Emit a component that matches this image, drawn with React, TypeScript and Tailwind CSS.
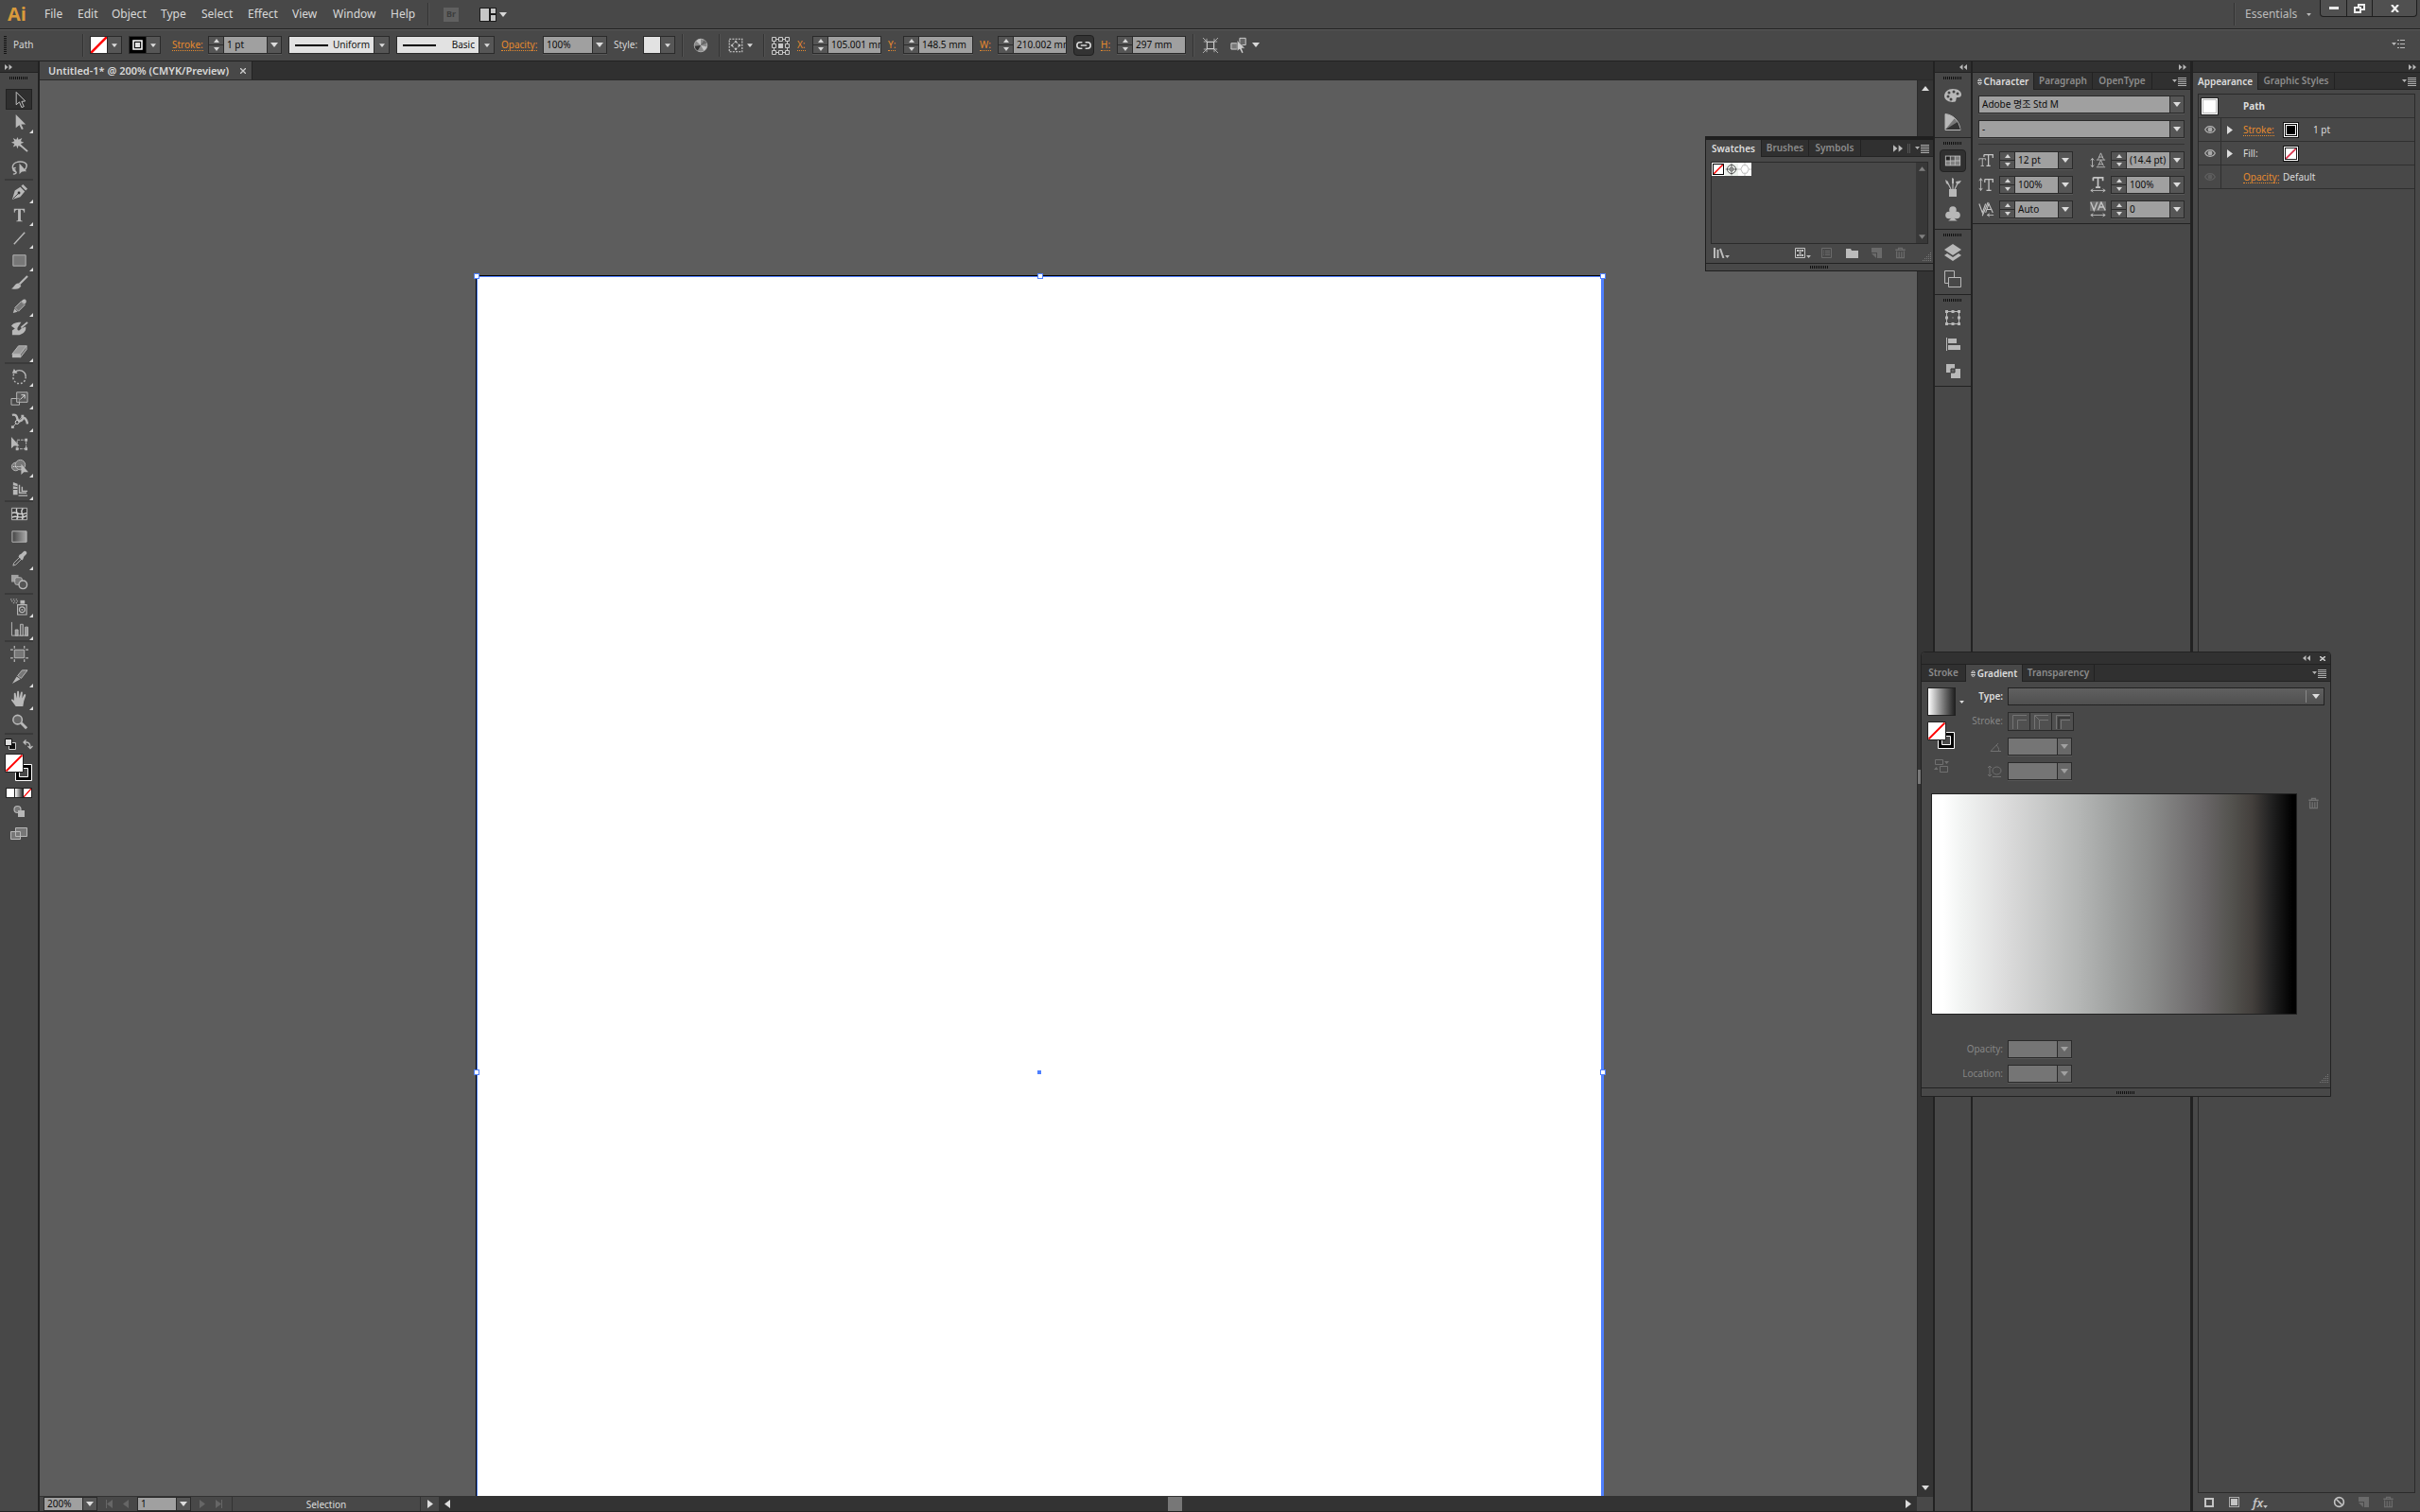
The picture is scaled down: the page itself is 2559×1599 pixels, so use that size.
import { memo, type ReactNode } from 'react';
import clsx from 'clsx';

type IconProps = { children: ReactNode; size?: number; className?: string };

function Icon({ children, size = 20, className }: IconProps) {
  return (
    <svg
      width={size}
      height={size}
      viewBox="0 0 20 20"
      fill="none"
      stroke="currentColor"
      strokeWidth="1"
      aria-hidden="true"
      className={clsx('shrink-0', className)}
    >
      {children}
    </svg>
  );
}

const Down = ({ className }: { className?: string }) => (
  <svg width="8" height="5" viewBox="0 0 8 5" fill="currentColor" aria-hidden="true" className={className}>
    <path d="M0 0h8L4 5z" />
  </svg>
);

const Right = ({ className }: { className?: string }) => (
  <svg width="6" height="9" viewBox="0 0 6 9" fill="currentColor" aria-hidden="true" className={className}>
    <path d="M0 0l6 4.5L0 9z" />
  </svg>
);

const Collapse = ({ left = false, large = false }: { left?: boolean; large?: boolean }) => (
  <svg
    width={large ? 10 : 8}
    height={large ? 8 : 6}
    viewBox="0 0 8 6"
    fill="#b8b8b8"
    aria-hidden="true"
    className={left ? 'rotate-180' : ''}
  >
    <path d="M0 0l3.500 3L0 6zM4.500 0L8 3 4.500 6z" />
  </svg>
);

const PanelMenu = () => (
  <button aria-label="Panel menu" className="text-[#b0b0b0]">
    <svg width="15" height="9" viewBox="0 0 15 9" fill="currentColor">
      <path d="M0 2h5L2.500 5zM6 0h9v1H6zM6 2h9v1H6zM6 4h9v1H6zM6 6h9v1H6zM6 8h9v1H6z" />
    </svg>
  </button>
);

const Grip = ({ vertical = false }: { vertical?: boolean }) => (
  <div
    className={clsx(
      vertical
        ? 'h-5 w-[3px] bg-[repeating-linear-gradient(180deg,#151515_0_1px,#484848_1px_2px)]'
        : 'h-[3px] w-5 bg-[repeating-linear-gradient(90deg,#111_0_1px,#484848_1px_2px)]',
    )}
  />
);

const Sep = () => <div className="h-6 w-px shrink-0 bg-[#333] shadow-[1px_0_0_#525252]" />;

/* ---------- form parts ---------- */

function Spinner({ label }: { label: string }) {
  return (
    <span className="flex w-4 shrink-0 flex-col divide-y divide-[#2a2a2a] border-r border-[#2a2a2a] text-[#d6d6d6]">
      <button aria-label={`Increase ${label}`} className="flex flex-1 items-center justify-center bg-[#555]">
        <svg width="6" height="4" viewBox="0 0 6 4" fill="currentColor"><path d="M0 4h6L3 0z" /></svg>
      </button>
      <button aria-label={`Decrease ${label}`} className="flex flex-1 items-center justify-center bg-[#555]">
        <svg width="6" height="4" viewBox="0 0 6 4" fill="currentColor"><path d="M0 0h6L3 4z" /></svg>
      </button>
    </span>
  );
}

type FieldProps = {
  label: string;
  value?: string;
  className: string;
  spinner?: boolean;
  arrow?: boolean;
  disabled?: boolean;
};

function Field({ label, value = '', className, spinner, arrow = true, disabled }: FieldProps) {
  return (
    <div className={clsx('flex h-[19px] shrink-0 border border-[#2a2a2a] shadow-[0_1px_0_#575757]', className)}>
      {spinner && <Spinner label={label} />}
      <input
        aria-label={label}
        defaultValue={value}
        disabled={disabled}
        className={clsx('w-0 min-w-0 flex-1 pl-[3px] text-[10px] outline-none', disabled ? 'bg-[#757575]' : 'bg-[#a0a0a0] text-[#0c0c0c]')}
      />
      {arrow && (
        <button
          aria-label={`${label} options`}
          disabled={disabled}
          className={clsx(
            'flex w-[15px] shrink-0 items-center justify-center border-l border-[#2a2a2a]',
            disabled ? 'bg-[#686868] text-[#a0a0a0]' : 'bg-[#565656] text-[#dcdcdc]',
          )}
        >
          <Down />
        </button>
      )}
    </div>
  );
}

function LineSelect({ label, value, className }: { label: string; value: string; className: string }) {
  return (
    <div className={clsx('relative flex h-[19px] shrink-0 border border-[#2a2a2a]', className)}>
      <select aria-label={label} className="min-w-0 flex-1 appearance-none bg-[#e2e2e2] pr-5 text-right text-[10px] text-[#111] outline-none [text-align-last:right]">
        <option>{value}</option>
      </select>
      <span className="pointer-events-none absolute top-2 left-[6px] h-[2px] w-[35px] bg-black" />
      <span className="pointer-events-none absolute inset-y-0 right-0 flex w-4 items-center justify-center border-l border-[#2a2a2a] bg-[#565656] text-[#dcdcdc]">
        <Down className="h-1 w-1.5" />
      </span>
    </div>
  );
}

function SwatchButton({ label, children }: { label: string; children: ReactNode }) {
  return (
    <button aria-label={label} className="flex h-[19px] w-[34px] shrink-0 border border-[#2a2a2a] bg-[#565656] text-[#dcdcdc]">
      <span className="flex h-full w-[18px] border-r border-[#2a2a2a]">{children}</span>
      <span className="flex h-full flex-1 items-center justify-center"><Down className="h-1 w-1.5" /></span>
    </button>
  );
}

const NoneMark = ({ color = '#f00' }: { color?: string }) => (
  <svg viewBox="0 0 20 20" preserveAspectRatio="none" className="size-full bg-white" aria-hidden="true">
    <path d="M0 20L20 0" stroke={color} strokeWidth="3" />
  </svg>
);

const Orange = ({ children, className }: { children: ReactNode; className?: string }) => (
  <span className={clsx('shrink-0', className)}>
    <a href="#" className="inline-block border-b border-dotted border-[#e68a2e] text-[10px] leading-3 text-[#e68a2e]">{children}</a>
  </span>
);

const FillStroke = () => (
  <button aria-label="Fill and stroke" className="block size-[30px]">
    <svg viewBox="0 0 30 30" width="30" height="30">
      <path d="M11.500 11.500h17v17h-17z" fill="#000" stroke="#fff" />
      <path d="M15.500 15.500h9v9h-9z" fill="#484848" stroke="#fff" />
      <path d="M.5.500h19v19H.500z" fill="#fff" stroke="#222" />
      <path d="M1.500 18.500l17-17" stroke="#f00" strokeWidth="1.800" />
    </svg>
  </button>
);

/* ---------- menu and control bars ---------- */

const menus: [string, string][] = [
  ['File', 'w-[35px]'],
  ['Edit', 'w-9'],
  ['Object', 'w-[52px]'],
  ['Type', 'w-[43px]'],
  ['Select', 'w-[49px]'],
  ['Effect', 'w-[47px]'],
  ['View', 'w-[43px]'],
  ['Window', 'w-[61px]'],
  ['Help', 'w-[39px]'],
];

function MenuBar() {
  return (
    <header className="flex h-[31px] shrink-0 items-center border-b border-[#222] bg-[#484848] pl-2 text-[12px] text-[#d8d8d8]">
      <span className="w-[39px] font-['Open_Sans',sans-serif] text-[20px] leading-7 font-bold text-[#d99a3c]">Ai</span>
      <nav className="flex">
        {menus.map(([name, width]) => (
          <button key={name} className={clsx('text-left', width)}>{name}</button>
        ))}
      </nav>
      <Sep />
      <button aria-label="Bridge" className="ml-4 flex h-[15px] w-4 items-center justify-center bg-[#606060] text-[9px] font-bold text-[#3d3d3d]">Br</button>
      <button aria-label="Arrange documents" className="ml-[22px] flex items-center gap-[3px] text-[#d8d8d8]">
        <svg width="18" height="15" viewBox="0 0 18 15" fill="#c6c6c6">
          <path d="M0 0h18v15H0z" fill="#1c1c1c" />
          <path d="M1 1h9v13H1zM12 1h5v5h-5zM12 8h5v6h-5z" />
        </svg>
        <Down />
      </button>
      <div className="ml-auto flex h-full items-center">
        <Sep />
        <button className="ml-[11px] flex w-[79px] items-center gap-2.5 text-[#bcbcbc]">
          Essentials <Down className="h-[3px] w-[5px]" />
        </button>
        <div className="mr-[3px] flex h-[18px] self-start divide-x divide-[#1e1e1e] rounded-b border border-t-0 border-[#1e1e1e] bg-[#505050] text-white">
          <button aria-label="Minimize" className="flex w-7 items-center justify-center"><span className="h-[3px] w-2.5 bg-[#e8e8e8]" /></button>
          <button aria-label="Restore" className="flex w-[27px] items-center justify-center">
            <svg width="12" height="10" viewBox="0 0 12 10" fill="none" stroke="#eee" strokeWidth="2"><path d="M1 4h6v5H1zM5 3V1h6v5H8" /></svg>
          </button>
          <button aria-label="Close" className="flex w-[46px] items-center justify-center">
            <svg width="9" height="8" viewBox="0 0 9 8" stroke="#eee" strokeWidth="2.200"><path d="M1 0l7 8M8 0L1 8" /></svg>
          </button>
        </div>
      </div>
    </header>
  );
}

function ControlBar() {
  return (
    <div className="flex h-[34px] shrink-0 items-center gap-[7px] border-t border-b border-t-[#5a5a5a] border-b-[#222] bg-[#484848] pr-4 pb-px pl-1 text-[10px] text-[#d8d8d8]">
      <Grip vertical />
      <span className="w-[66px]">Path</span>
      <Sep />
      <SwatchButton label="Fill"><NoneMark /></SwatchButton>
      <SwatchButton label="Stroke">
        <svg viewBox="0 0 17 17" className="size-full"><path d="M0 0h17v17H0z" fill="#000" /><path d="M4 4h9v9H4z" fill="#111" stroke="#fff" strokeWidth="1.500" /><path d="M6 6h5v5H6z" fill="#e2e2e2" /></svg>
      </SwatchButton>
      <div className="ml-[5px] flex items-center">
        <Orange className="w-[38px]">Stroke:</Orange>
        <Field label="Stroke weight" value="1 pt" className="w-[78px]" spinner />
      </div>
      <LineSelect label="Variable width profile" value="Uniform" className="w-[107px]" />
      <LineSelect label="Brush definition" value="Basic" className="w-[104px]" />
      <div className="flex items-center">
        <Orange className="w-11">Opacity:</Orange>
        <Field label="Opacity" value="100%" className="w-[68px]" />
      </div>
      <div className="flex items-center">
        <span className="w-[31px]">Style:</span>
        <SwatchButton label="Graphic style"><span className="size-full bg-[#e2e2e2]" /></SwatchButton>
      </div>
      <Sep />
      <button aria-label="Recolor artwork" className="flex w-6 justify-center">
        <Icon size={16}>
          <circle cx="10" cy="10" r="8.500" fill="#8a8a8a" stroke="#bbb" />
          <path d="M10 10L4 4a8 8 0 0 1 6-2.500zM10 10l8 2a8 8 0 0 1-4 5z" fill="#c4c4c4" stroke="none" />
          <path d="M10 10l-4 7a8 8 0 0 1-4-6z" fill="#333" stroke="none" />
          <path d="M10 10l4-7a8 8 0 0 1 4 4z" fill="#666" stroke="none" />
        </Icon>
      </button>
      <Sep />
      <button aria-label="Align to" className="mx-[2px] flex w-7 items-center gap-1">
        <Icon size={16}>
          <path d="M1.500 1.500h17v17h-17z" strokeDasharray="2.500 1.500" strokeWidth="1.300" />
          <path d="M10 3l2 3H8zM10 17l2-3H8zM3 10l3-2v4zM17 10l-3-2v4z" fill="currentColor" stroke="none" />
          <circle cx="10" cy="10" r="4" strokeDasharray="3 1.500" />
        </Icon>
        <Down className="h-1 w-1.5" />
      </button>
      <Sep />
      <button aria-label="Reference point">
        <Icon size={20} className="text-[#c8c8c8]">
          <path d="M1.500 1.500h4v4h-4zM8.500 1.500h4v4h-4zM15.500 1.500h4v4h-4zM1.500 8.500h4v4h-4zM15.500 8.500h4v4h-4zM1.500 15.500h4v4h-4zM8.500 15.500h4v4h-4zM15.500 15.500h4v4h-4zM6 3.500h2M13 3.500h2M6 17.500h2M13 17.500h2M3.500 6v2M3.500 13v2M17.500 6v2M17.500 13v2" />
          <path d="M8 8h5v5H8z" fill="currentColor" stroke="none" />
        </Icon>
      </button>
      <div className="ml-[1px] flex items-center">
        <Orange className="w-4">X:</Orange>
        <Field label="X" value="105.001 mm" className="w-[73px]" spinner arrow={false} />
      </div>
      <div className="flex items-center">
        <Orange className="w-4">Y:</Orange>
        <Field label="Y" value="148.5 mm" className="w-[74px]" spinner arrow={false} />
      </div>
      <div className="flex items-center">
        <Orange className="w-[19px]">W:</Orange>
        <Field label="Width" value="210.002 mm" className="w-[73px]" spinner arrow={false} />
      </div>
      <button aria-label="Constrain proportions" className="flex h-[22px] w-[22px] items-center justify-center rounded-sm border border-[#202020] bg-[#333]">
        <Icon size={16}><path d="M8 6H5a4 4 0 0 0 0 8h3M12 6h3a4 4 0 0 1 0 8h-3M6 10h8" strokeWidth="2" /></Icon>
      </button>
      <div className="flex items-center">
        <Orange className="w-[17px]">H:</Orange>
        <Field label="Height" value="297 mm" className="w-[73px]" spinner arrow={false} />
      </div>
      <Sep />
      <button aria-label="Isolate object" className="ml-[3px] text-[#c8c8c8]">
        <Icon size={16}><path d="M5.500 5.500h9v9h-9z" strokeWidth="1.500" /><path d="M0 0l5 5M20 0l-5 5M0 20l5-5M20 20l-5-5M1 5h4V1M15 1v4h4M1 15h4v4M19 15h-4v4" /></Icon>
      </button>
      <button aria-label="Select similar objects" className="ml-1.5 flex items-center gap-[5px] text-[#d8d8d8]">
        <Icon size={18}>
          <path d="M1 7.500h7v7H1z" fill="#777" /><path d="M11 1.500h7v8h-7z" fill="#666" />
          <path d="M8 4v13l3-2.500 2.500 5 2-1-2-5h4z" fill="#ccc" stroke="#333" strokeWidth=".600" />
        </Icon>
        <Down />
      </button>
      <div className="ml-auto">
        <button aria-label="Control bar menu" className="text-[#b8b8b8]">
          <svg width="14" height="9" viewBox="0 0 14 9" fill="currentColor"><path d="M0 3h5L2.500 6zM6 0h2v1H6zM6 4h2v1H6zM6 8h2v1H6zM9 0h5v1H9zM9 4h5v1H9zM9 8h5v1H9z" /></svg>
        </button>
      </div>
    </div>
  );
}

/* ---------- toolbox ---------- */

type Tool = { name: string; art: ReactNode; more?: boolean };

const F = { fill: 'currentColor', stroke: 'none' };

const toolGroups: Tool[][] = [
  [
    { name: 'Selection', art: <path d="M6.500 1.500v14l3.500-3 2.500 6 2.500-1-2.500-5.500 4-.5z" fill="#2c2c2c" stroke="#c8c8c8" /> },
    { name: 'Direct Selection', more: true, art: <path {...F} d="M6 1v15l4-3 2.500 5 2-1-2.500-5h5z" /> },
    { name: 'Magic Wand', art: <><path {...F} d="M8 1l1 3 4-2-1.500 3.500L15 7l-3.500 1.500L13 12l-4-1.500L8 14l-1.500-3.500L3 12l1.500-3.500L1 7l3.500-1.500L3 2l3.500 2z" /><path d="M11 10l8 7" strokeWidth="2" /></> },
    { name: 'Lasso', art: <><path d="M6 13C1 12 1 5 8 3.500c6-1 11 1 10 5s-4 5-6 5M6 10c-3 0-4 3-1 4s1 3-2 3" strokeWidth="1.500" /><path {...F} d="M10 5v12l3-3h5z" /></> },
  ],
  [
    { name: 'Pen', more: true, art: <><path {...F} d="M2 18l3-10 6-4 5 5-5 6z" /><path {...F} d="M12 3l2-2 5 5-2 2z" /><path d="M3 17l6-6" stroke="#444" /><circle cx="9.500" cy="10.500" r="1.500" fill="#333" stroke="none" /></> },
    { name: 'Type', more: true, art: <path {...F} d="M4 3h12v4h-1c0-2-1-3-3.500-3v11c0 1 .5 1.500 2 1.500v.5h-7v-.5c1.500 0 2-.5 2-1.500V4C6 4 5 5 5 7H4z" /> },
    { name: 'Line Segment', more: true, art: <path d="M4 17L16 4" strokeWidth="1.500" /> },
    { name: 'Rectangle', more: true, art: <path d="M3 4h14v12H3z" fill="#777" /> },
    { name: 'Paintbrush', art: <><path d="M19 2l-9 9" strokeWidth="2.200" /><path {...F} d="M9 10l3 3c-2 4-6 4-11 3 3-1 4-6 8-6z" /></> },
    { name: 'Pencil', more: true, art: <><path {...F} d="M3 18l1.500-5 3.500 3.500z" /><path d="M5 12l7-7 4 4-7 7z" fill="#777" /><path {...F} d="M13 4c3-3 6 0 4 3l-1 1-4-3z" /></> },
    { name: 'Blob Brush', art: <><path {...F} d="M1 7c3-4 8-4 11-4L8 9c-1 4 2 4 4 1l5-2c1 4-2 8-7 9H2v-5l3-2z" /><path d="M19 3l-7 6" strokeWidth="2" /></> },
    { name: 'Eraser', more: true, art: <><path d="M2 13l7-9h9l-7 9z" fill="#999" /><path {...F} d="M2 13h9v4H2z" /><path d="M11 13v4l7-9V4z" fill="#777" /></> },
  ],
  [
    { name: 'Rotate', more: true, art: <><path d="M5 6a7 7 0 0 1 12 5" strokeWidth="1.500" /><path d="M17 11a7 7 0 1 1-13-3" strokeDasharray="2 2" strokeWidth="1.500" /><path {...F} d="M2 7l2-5 4 5z" /></> },
    { name: 'Scale', more: true, art: <><path d="M1 10h9v7H1z" /><path d="M7 3h12v11H7z" fill="#666" fillOpacity=".6" /><path d="M11 11l5-5M12 6h4v4" stroke="#ddd" /></> },
    { name: 'Width', more: true, art: <><path d="M2 3c4-1 5 1 6 5s5 1 6-1 4 0 5 6" strokeWidth="2.500" /><path d="M2 17L14 4" /><circle cx="7.500" cy="11" r="2" fill="#444" stroke="#ddd" /><path {...F} d="M1 15h3v3H1zM12 3h3v3h-3z" /></> },
    { name: 'Free Transform', more: false, art: <><path {...F} d="M1 2v13l3-3h6z" /><path d="M7.500 5.500h10v10h-10z" strokeDasharray="3 1" /><path {...F} d="M16 4h3v3h-3zM16 14h3v3h-3zM6 14h3v3H6z" /></> },
    { name: 'Shape Builder', more: true, art: <><circle cx="6" cy="10" r="4.500" fill="#777" /><circle cx="11" cy="8" r="5.500" fill="#777" /><path d="M3 10h11" stroke="#eee" strokeDasharray="1 1" /><path {...F} d="M12 7v12l3-3h5z" /></> },
    { name: 'Perspective Grid', more: true, art: <><path {...F} d="M3 2l5 2v12H3z" /><path d="M10 5v9h8M13 7v5h6M9 17h10" strokeWidth="1.500" /><path d="M3 6l5 1M3 10h5" stroke="#444" /></> },
  ],
  [
    { name: 'Mesh', art: <><path d="M1.500 3.500h17v13h-17z" fill="#3a3a3a" /><path d="M2 9c5-3 6 4 16 0M2 14c4-4 10 3 16-2M7 4c-2 5 4 7 0 12M14 4c-5 5 3 7-1 12" stroke="#d0d0d0" strokeWidth="1.500" /></> },
    { name: 'Gradient', art: <><defs><linearGradient id="gt"><stop stopColor="#444" /><stop offset="1" stopColor="#aaa" /></linearGradient></defs><path d="M2 4h16v12H2z" fill="url(#gt)" /></> },
    { name: 'Eyedropper', more: true, art: <><path d="M3 17l1-3 7-7 2 2-7 7z" /><path {...F} d="M10 5l2-1 3-3c2-1 4 1 3 3l-3 3-1 3-1 1-4-4z" /></> },
    { name: 'Blend', art: <><path {...F} d="M1 2h8v8H1z" opacity=".8" /><rect x="5" y="5" width="8" height="8" rx="2" fill="#777" /><circle cx="14" cy="13" r="4.500" fill="#555" strokeWidth="1.500" /></> },
  ],
  [
    { name: 'Symbol Sprayer', more: true, art: <><path d="M8 8h10v11H8z" strokeWidth="1.200" /><circle cx="13" cy="13.500" r="3" strokeWidth="1.300" /><circle {...F} cx="13" cy="13.500" r="1" /><path {...F} d="M11 3h5v4h-5z" /><path d="M0 2h9M1 4h9M3 6h6" strokeDasharray="1.500 1.500" /></> },
    { name: 'Column Graph', more: true, art: <><path d="M1.500 2v15H20" /><path d="M5.500 10.500h3V17h-3zM16.500 7.500h3V17h-3z" fill="#999" /><path d="M11 4.500h3V17h-3z" fill="#666" /></> },
  ],
  [
    { name: 'Artboard', art: <><path d="M4.500 5.500h11v9h-11z" fill="#777" /><path d="M4.500 1v3M15.500 1v3M4.500 16v3M15.500 16v3M0 5.500h3M17 5.500h3M0 14.500h3M17 14.500h3" strokeWidth="1.300" /></> },
    { name: 'Slice', more: true, art: <><path {...F} d="M2 18l5-8 4 3z" /><path d="M8 9l5-6h6l-7 9z" fill="#777" /></> },
    { name: 'Hand', more: true, art: <path {...F} d="M6 18L1 11c0-2 2-1 3 .5L4 4c0-1.500 2-1.500 2 0l1 5 .5-7c0-1.500 2-1.500 2 0L10 9l1.500-6.500c.5-1.500 2-1 2 .5L13 9l2-4c1-1.500 2.500-.5 2 1l-2 6-1 6z" /> },
    { name: 'Zoom', art: <><circle cx="8" cy="7.500" r="5" fill="#666" strokeWidth="1.600" /><path d="M12 11l6 6" strokeWidth="3" /></> },
  ],
];

function ToolBox() {
  return (
    <aside className="flex w-[42px] shrink-0 flex-col items-center border-r-2 border-[#222] bg-[#484848] text-[#b8b8b8]">
      <div className="flex h-3 w-full items-center border-b border-[#222] bg-[#313131] pl-[5px]"><Collapse /></div>
      <div className="flex h-4 items-start pt-1"><Grip /></div>
      {toolGroups.map((group, i) => (
        <div key={i} className="w-[30px] border-b-2 border-[#3a3a3a] last-of-type:border-b-0">
          {group.map((tool) => (
            <button
              key={tool.name}
              aria-label={tool.name}
              className="relative flex h-6 w-full items-center justify-center"
            >
              <span className={clsx('flex h-[22px] w-7 items-center justify-center', tool.name === 'Selection' && 'border border-[#222] bg-[#2f2f2f]')}>
                <Icon size={19}>{tool.art}</Icon>
              </span>
              {tool.more && (
                <svg width="4" height="4" className="absolute right-0 bottom-0" fill="#ddd"><path d="M4 0v4H0z" /></svg>
              )}
            </button>
          ))}
        </div>
      ))}
      <div className="flex h-5 w-[30px] items-center justify-between">
        <button aria-label="Default fill and stroke">
          <svg width="12" height="12" viewBox="0 0 12 12"><path d="M4.500 4.500h7v7h-7z" fill="#111" stroke="#ccc" /><path d="M.5.500h7v7h-7z" fill="#ddd" stroke="#111" /></svg>
        </button>
        <button aria-label="Swap fill and stroke">
          <svg width="11" height="11" viewBox="0 0 11 11" fill="none" stroke="#bbb" strokeWidth="1.300"><path d="M1 3h3c3 0 4 2 4 6M3.500.500L1 3l2.500 2.500M5.500 7L8 9.500 10.500 7" /></svg>
        </button>
      </div>
      <FillStroke />
      <div className="mt-[6px] flex h-[11px] w-7 divide-x divide-[#222] border border-[#222]">
        <button aria-label="Color" className="flex-1 bg-white" />
        <button aria-label="Gradient fill" className="flex-1 bg-linear-to-r from-white to-[#333]" />
        <button aria-label="None" className="flex flex-1"><NoneMark /></button>
      </div>
      <button aria-label="Drawing mode" className="mt-1"><Icon><circle cx="8.500" cy="8" r="3.500" fill="#777" strokeWidth="1.200" /><path {...F} d="M9 9h7v7H9z" /></Icon></button>
      <button aria-label="Screen mode" className="mt-[3px]"><Icon><path d="M1.500 8.500h10v8h-10zM6.500 4.500h12v9h-12z" fill="#777" /></Icon></button>
    </aside>
  );
}

/* ---------- document window ---------- */

const handles = [
  'left-[-3px] top-[-3px]',
  'left-1/2 -ml-[3px] top-[-3px]',
  'right-[-2px] top-[-3px]',
  'left-[-3px] top-1/2 -mt-[3px]',
  'right-[-2px] top-1/2 -mt-[3px]',
];

function Canvas() {
  return (
    <div className="relative min-w-0 flex-1 overflow-hidden bg-[#5d5d5d]">
      <div className="absolute top-[206px] left-[461px] h-[1685px] w-[1193px] border-t border-l border-black bg-white">
        <div className="absolute inset-0 border-t border-r-[3px] border-l border-[#4f80ff]" />
        {handles.map((pos) => (
          <span key={pos} className={clsx('absolute size-[6px] border border-[#4f80ff] bg-white', pos)} />
        ))}
        <span className="absolute top-1/2 left-1/2 -mt-0.5 -ml-[3px] size-1 bg-[#4f80ff]" />
      </div>
    </div>
  );
}

function StatusBar() {
  return (
    <footer className="flex h-4 shrink-0 border-t border-[#333] bg-[#484848] text-[10px] text-[#dcdcdc]">
      <div className="flex w-[203px] items-center gap-[9px] pl-1">
        <Field label="Zoom level" value="200%" className="h-[15px]! w-[57px]" />
        <span className="flex w-6 justify-between text-[#666]">
          <button aria-label="First artboard" className="flex"><i className="h-[9px] w-px bg-current" /><Right className="rotate-180" /></button>
          <button aria-label="Previous artboard"><Right className="rotate-180" /></button>
        </span>
        <Field label="Artboard" value="1" className="h-[15px]! w-[57px]" />
        <span className="flex w-6 justify-between text-[#666]">
          <button aria-label="Next artboard"><Right /></button>
          <button aria-label="Last artboard" className="flex"><Right /><i className="h-[9px] w-px bg-current" /></button>
        </span>
      </div>
      <span className="flex w-[200px] items-center justify-center border-x border-[#333] pt-0.5">Selection</span>
      <button aria-label="Status menu" className="flex w-[19px] items-center justify-center"><Right /></button>
      <div className="flex min-w-0 flex-1 items-center justify-between bg-[#333] px-1.5">
        <button aria-label="Scroll left"><Right className="rotate-180" /></button>
        <span className="mr-1.5 h-full w-[15px] bg-[#777]" />
        <button aria-label="Scroll right"><Right /></button>
      </div>
      <div className="w-[17px] bg-[#484848]" />
    </footer>
  );
}

function DocumentWindow() {
  return (
    <main className="flex min-w-0 flex-1 flex-col">
      <div className="flex h-5 shrink-0 border-b border-[#2a2a2a] bg-[#303030]">
        <div className="flex w-[225px] items-center justify-between border-r border-[#222] bg-[#484848] pr-[6px] pl-[9px]">
          <span className="text-[11px] leading-5 font-semibold whitespace-nowrap text-[#d8d8d8]">Untitled-1* @ 200% (CMYK/Preview)</span>
          <button aria-label="Close document">
            <svg width="6" height="6" viewBox="0 0 6 6" stroke="#ccc" strokeWidth="1.300"><path d="M0 0l6 6M6 0L0 6" /></svg>
          </button>
        </div>
      </div>
      <div className="flex min-h-0 flex-1">
        <Canvas />
        <div className="flex w-[17px] shrink-0 flex-col items-center justify-between border-l border-[#2a2a2a] bg-[#343434] py-1.5 text-[#dcdcdc]">
          <button aria-label="Scroll up"><Down className="rotate-180" /></button>
          <span className="mb-6 h-[15px] w-full bg-[#777]" />
          <button aria-label="Scroll down"><Down /></button>
        </div>
      </div>
      <StatusBar />
    </main>
  );
}

/* ---------- docks ---------- */

const dockGroups: { name: string; art: ReactNode; active?: boolean }[][] = [
  [
    { name: 'Color', art: <><path {...F} d="M10 3c6 0 9 3 9 6s-3 3-4 3c-2 0-1 2-2 4-2 2-11 1-12-5 0-5 4-8 9-8z" /><g fill="#444" stroke="none"><circle cx="5" cy="11" r="1.500" /><circle cx="8" cy="14" r="1.500" /><circle cx="6" cy="7" r="1.500" /><circle cx="11" cy="6" r="1.500" /><circle cx="15" cy="8" r="1.500" /></g></> },
    { name: 'Color Guide', art: <><path d="M2 1.500c9 1 15 8 16 17H2z" fill="#777" /><path {...F} d="M2 2c4 0 8 2 10 4L2 18z" /><path d="M2 18l13-8 3 8z" fill="#333" stroke="none" /></> },
  ],
  [
    { name: 'Swatches', active: true, art: <><path d="M1 4h18v12H1z" fill="#bbb" stroke="none" /><path d="M2 5h4.500v4.500H2z" fill="#222" stroke="none" /><path d="M7.500 5H12v4.500H7.500z" fill="#555" stroke="none" /><path d="M13 5h5v4.500h-5zM2 10.500h4.500V15H2zM7.500 10.500H12V15H7.500zM13 10.500h5V15h-5z" fill="#808080" stroke="none" /></> },
    { name: 'Brushes', art: <><path {...F} d="M6 12h8v8H6z" /><path d="M8 12L5 6M10 12V4M12 12l3-6" strokeWidth="1.200" /><path {...F} d="M2 2l3 2 1 4-3-2zM9 0l2 1v5H9zM13 4l6-1-2 3-3 1z" /></> },
    { name: 'Symbols', art: <><circle {...F} cx="10" cy="6" r="3.800" /><circle {...F} cx="6" cy="11.500" r="3.800" /><circle {...F} cx="14" cy="11.500" r="3.800" /><path {...F} d="M9 9h2c0 5 1 7 4 8.500H5c3-1.500 4-3.500 4-8.500z" /></> },
  ],
  [
    { name: 'Layers', art: <><path {...F} d="M10 1l9 6-9 6-9-6z" /><path {...F} d="M4 11l6 4 6-4 3 2-9 6-9-6z" /></> },
    { name: 'Artboards', art: <><path d="M1.500 1.500h10v13h-10z" /><path d="M5.500 8.500h13v10h-13z" fill="#484848" /></> },
  ],
  [
    { name: 'Transform', art: <><path d="M3.500 3.500h13v13h-13z" /><path {...F} d="M2 2h3v3H2zM8.500 2h3v3h-3zM15 2h3v3h-3zM2 8.500h3v3H2zM15 8.500h3v3h-3zM2 15h3v3H2zM8.500 15h3v3h-3zM15 15h3v3h-3zM9.500 9.500h1v1h-1z" /></> },
    { name: 'Align', art: <><path d="M3.500 3v14" /><path {...F} d="M5 4h9v5H5zM5 11h13v5H5z" /></> },
    { name: 'Pathfinder', art: <><path {...F} d="M3 3h9v9H3zM8 8h10v10H8z" /><path d="M8 8h4v4H8z" fill="#666" stroke="#333" /></> },
  ],
];

const DockHeader = ({ left }: { left?: boolean }) => (
  <div className="flex h-3 shrink-0 items-center justify-end border-b border-[#222] bg-[#313131] pr-1">
    <Collapse left={left} />
  </div>
);

function IconDock() {
  return (
    <aside className="flex w-[42px] shrink-0 flex-col border-x-2 border-[#222] bg-[#484848] text-[#b8b8b8]">
      <DockHeader left />
      {dockGroups.map((group, i) => (
        <div key={i} className="flex flex-col items-center border-b border-[#222] pb-0.5">
          <div className="flex h-[10px] items-center"><Grip /></div>
          {group.map((item) => (
            <button key={item.name} aria-label={item.name} className="flex h-7 items-center">
              <span className={clsx('flex h-6 w-7 items-center justify-center', item.active && 'rounded-sm border border-[#222] bg-[#303030]')}>
                <Icon size={item.active ? 18 : 20}>{item.art}</Icon>
              </span>
            </button>
          ))}
        </div>
      ))}
    </aside>
  );
}

type Tab = { name: string; width: string; sort?: boolean };

function Tabs({ tabs, active, extra }: { tabs: Tab[]; active: string; extra?: ReactNode }) {
  return (
    <div className="flex h-[18px] shrink-0 bg-[#303030] shadow-[inset_0_-1px_0_#242424]">
      <div role="tablist" className="flex">
        {tabs.map((tab) => (
          <button
            key={tab.name}
            role="tab"
            aria-selected={tab.name === active}
            className={clsx(
              'flex items-center justify-center gap-0.5 border-r border-[#222] text-[10px] font-semibold',
              tab.width,
              tab.name === active ? 'bg-[#484848] text-[#dedede]' : 'border-b text-[#8c8c8c]',
            )}
          >
            {tab.sort && <svg width="5" height="9" viewBox="0 0 5 9" fill="none" stroke="#ccc" className="shrink-0"><path d="M.5 3.500l2-2.500 2 2.500zM.5 5.500l2 2.500 2-2.500z" /></svg>}
            {tab.name}
          </button>
        ))}
      </div>
      <div className="ml-auto flex items-center gap-[5px] pr-1">{extra}<PanelMenu /></div>
    </div>
  );
}

const charRows: [string, string, ReactNode, string, string, ReactNode][] = [
  [
    'Font size', '12 pt', <><path d="M7 3h11v4M12.500 3v14M10 17h5M7 3v3" strokeWidth="1.500" /><path d="M1 8h8v2M5 8v9M3 17h4M1 8v2" /></>,
    'Leading', '(14.4 pt)', <><path d="M10 9l3.500-8L17 9M11 6h5M10 17l3.500-7 3.500 7M11 15h5M8 9.500h11M8 18.500h11M3 8v10M1 10l2-2.500L5 10M1 16l2 2.500L5 16" /></>,
  ],
  [
    'Vertical scale', '100%', <><path d="M8 3h10v4M13 3v14M10 17h6M8 3v4" strokeWidth="1.500" /><path d="M3 2v15M1 5l2-3 2 3M1 14l2 3 2-3" /></>,
    'Horizontal scale', '100%', <><path d="M4 1h12v4M10 1v12M7 13h6M4 1v4" strokeWidth="2" /><path d="M1 17h18M4 15l-3 2 3 2M16 15l3 2-3 2" /></>,
  ],
  [
    'Kerning', 'Auto', <><path d="M1 3l4 11L9 3M9 14l4-11 5 11M11 10h6M12 1L5 18" strokeWidth="1.300" /><path d="M11 17h8M14 15l-3 2 3 2" /></>,
    'Tracking', '0', <><path {...F} d="M0 0h20v12H0z" opacity=".3" /><path d="M1 1l4 10L9 1M10 11l4-10 5 10M12 7h5" strokeWidth="1.600" /><path d="M1 17h18M4 15l-3 2 3 2M16 15l3 2-3 2" /></>,
  ],
];

function CharacterPanel() {
  return (
    <section className="flex w-[232px] shrink-0 flex-col border-r-2 border-[#222] bg-[#484848] text-[#c4c4c4]">
      <DockHeader />
      <Tabs
        active="Character"
        tabs={[
          { name: 'Character', width: 'w-[65px]', sort: true },
          { name: 'Paragraph', width: 'w-[62px]' },
          { name: 'OpenType', width: 'w-[63px]' },
        ]}
      />
      <div className="flex flex-col gap-[7px] border-b border-[#222] px-[6px] pt-[6px] pb-[5px]">
        <Field label="Font family" value="Adobe 명조 Std M" className="w-full" />
        <Field label="Font style" value="-" className="w-full" />
        <div className="-mt-px h-px bg-[#333]" />
        {charRows.map(([l1, v1, i1, l2, v2, i2]) => (
          <div key={l1} className="flex items-center justify-between">
            <Icon size={17}>{i1}</Icon>
            <Field label={l1} value={v1} className="w-[78px]" spinner />
            <span className="w-2" />
            <Icon size={17}>{i2}</Icon>
            <Field label={l2} value={v2} className="w-[78px]" spinner />
          </div>
        ))}
      </div>
    </section>
  );
}

function Eye({ dim = false }: { dim?: boolean }) {
  return (
    <button aria-label="Toggle visibility" className={clsx('flex h-full w-6 shrink-0 items-center justify-center border-r border-[#303030]', dim ? 'text-[#5e5e5e]' : 'text-[#aaa]')}>
      <svg width="12" height="8" viewBox="0 0 12 8" fill="none" stroke="currentColor" strokeWidth="1.300"><path d="M.7 4C3-.5 9-.5 11.300 4 9 8.500 3 8.500.7 4z" /><circle cx="6" cy="4" r="1.800" fill="currentColor" /></svg>
    </button>
  );
}

const Trash = () => (
  <Icon size={13}><path d="M2 5h16M7 4V2h6v2" strokeWidth="2" /><path d="M4 7v11h12V7M8 8v9M12 8v9" strokeWidth="2" /></Icon>
);

const NewItem = () => (
  <svg width="11" height="11" viewBox="0 0 11 11" fill="currentColor" aria-hidden="true"><path d="M0 0h11v11H6V5H0zM0 6h5v5z" /></svg>
);

function AppearancePanel() {
  const row = 'flex h-[25px] items-center border-b border-[#303030]';
  return (
    <section className="flex w-[241px] shrink-0 flex-col border-l border-[#222] bg-[#484848] text-[10px] text-[#dcdcdc]">
      <DockHeader />
      <Tabs
        active="Appearance"
        tabs={[
          { name: 'Appearance', width: 'w-[69px]' },
          { name: 'Graphic Styles', width: 'w-[81px]' },
        ]}
      />
      <div className="mx-[5px] mt-1 flex-1 border border-[#2a2a2a]">
        <div className={row}>
          <span className="ml-0.5 size-[19px] border border-[#222] bg-white p-px"><span className="block size-full border border-[#bbb]" /></span>
          <span className="ml-[26px] font-bold">Path</span>
        </div>
        <div className={row}>
          <Eye />
          <button aria-label="Expand stroke" className="ml-[6px] w-[17px]"><Right /></button>
          <Orange className="w-[42px]">Stroke:</Orange>
          <button aria-label="Stroke color" className="flex size-[17px] border border-[#111] bg-white p-px"><span className="size-full border border-black bg-black shadow-[inset_0_0_0_1px_#fff]" /></button>
          <span className="ml-[15px]">1 pt</span>
        </div>
        <div className={row}>
          <Eye />
          <button aria-label="Expand fill" className="ml-[6px] w-[17px]"><Right /></button>
          <span className="w-[42px]">Fill:</span>
          <button aria-label="Fill color" className="flex size-[17px] border border-[#111] bg-white p-px"><span className="size-full border border-[#222]"><NoneMark color="#d8304a" /></span></button>
        </div>
        <div className={row}>
          <Eye dim />
          <Orange className="ml-[23px] w-[42px]">Opacity:</Orange>
          <span>Default</span>
        </div>
      </div>
      <div className="flex h-[19px] shrink-0 items-center pr-[27px] pl-3 text-[#c4c4c4]">
        <button aria-label="Add new stroke" className="size-[10px] border-2 border-[#c4c4c4]" />
        <button aria-label="Add new fill" className="ml-4 size-[11px] border border-[#aaa] p-px"><span className="block size-full bg-[#c4c4c4]" /></button>
        <button className="ml-3.5 flex items-end text-[13px] leading-4 font-semibold italic">fx<Down className="mb-0.5 h-[3px] w-[5px]" /></button>
        <span className="ml-auto flex items-center gap-[14px]">
          <button aria-label="Clear appearance"><Icon size={13}><circle cx="10" cy="10" r="7.500" strokeWidth="2.500" /><path d="M5 5l10 10" strokeWidth="2.500" /></Icon></button>
          <button aria-label="Duplicate item" className="text-[#6a6a6a]"><NewItem /></button>
          <button aria-label="Delete item" className="text-[#6a6a6a]"><Trash /></button>
        </span>
      </div>
    </section>
  );
}

/* ---------- floating panels ---------- */

const ResizeCorner = () => (
  <svg width="9" height="9" fill="#777" aria-hidden="true"><path d="M8 0h1v1H8zM6 2h1v1H6zM8 2h1v1H8zM4 4h1v1H4zM6 4h1v1H6zM8 4h1v1H8zM2 6h1v1H2zM4 6h1v1H4zM6 6h1v1H6zM8 6h1v1H8zM0 8h1v1H0zM2 8h1v1H2zM4 8h1v1H4zM6 8h1v1H6zM8 8h1v1H8z" /></svg>
);

function SwatchesPanel() {
  return (
    <section className="absolute top-[144px] right-[514px] flex w-[242px] flex-col border border-t-4 border-[#1f1f1f] bg-[#484848] text-[#bcbcbc]">
      <Tabs
        active="Swatches"
        tabs={[
          { name: 'Swatches', width: 'w-[59px]' },
          { name: 'Brushes', width: 'w-[50px]' },
          { name: 'Symbols', width: 'w-[55px]' },
        ]}
        extra={<><Collapse large /><span className="h-2.5 w-[3px] border-x border-[#555]" /></>}
      />
      <div className="mx-[5px] mt-[5px] flex h-[87px] border border-[#2a2a2a]">
        <div className="flex flex-1 items-start">
          <button aria-label="None swatch" className="size-[14px] border border-white"><span className="block size-full border border-black"><NoneMark /></span></button>
          <button aria-label="Registration swatch" className="size-[14px] bg-[#eef2ee] text-[#444]"><Icon size={14}><circle cx="10" cy="10" r="6.500" strokeWidth="1.300" /><circle cx="10" cy="10" r="3" /><path d="M10 1v18M1 10h18" /></Icon></button>
          <button aria-label="Pattern swatch" className="size-[14px] bg-white text-[#bbb]"><Icon size={14}><path d="M7 4h6l3 6-3 6H7l-3-6zM10 0v4M10 16v4M0 10h4M16 10h4" strokeWidth="1.300" /></Icon></button>
        </div>
        <div className="flex w-3 flex-col items-center justify-between bg-[#383838] py-1 text-[#808080]">
          <Down className="w-[7px] rotate-180" />
          <Down className="w-[7px]" />
        </div>
      </div>
      <div className="flex h-5 items-center pb-0.5 pl-2">
        <button aria-label="Swatch libraries" className="flex w-[86px] items-end">
          <svg width="12" height="11" viewBox="0 0 12 11" fill="none" stroke="currentColor" strokeWidth="2"><path d="M1 0v11M4.500 2v9M7 1l3.500 10" /></svg>
          <Down className="h-[3px] w-[5px]" />
        </button>
        <button aria-label="Show swatch kinds" className="flex w-7 items-end">
          <svg width="12" height="11" viewBox="0 0 12 11" fill="none"><path d="M.5.500h10v10H.500z" fill="#444" stroke="#c4c4c4" /><path d="M2 2h2v2H2zM7 2h2v2H7zM4.500 4.500h2v2h-2zM2 7h2v2H2zM7 7h2v2H7zM4.500 2h2v2h-2zM4.500 7h2v2h-2z" fill="#c4c4c4" /></svg>
          <Down className="h-[3px] w-[5px]" />
        </button>
        <button aria-label="Swatch options" className="w-[26px] text-[#6a6a6a]">
          <svg width="11" height="11" viewBox="0 0 11 11" fill="none" stroke="currentColor"><path d="M.5.500h10v10H.500zM2 3.500h1M4 3.500h5M2 5.500h1M4 5.500h5M2 7.500h1M4 7.500h5" /></svg>
        </button>
        <button aria-label="New color group" className="w-[27px]">
          <svg width="13" height="11" viewBox="0 0 13 11" fill="currentColor"><path d="M0 1h5l1 2h7v8H0z" /></svg>
        </button>
        <button aria-label="New swatch" className="w-6 text-[#6a6a6a]"><NewItem /></button>
        <button aria-label="Delete swatch" className="text-[#6a6a6a]"><Trash /></button>
        <span className="mt-auto mr-0.5 ml-auto"><ResizeCorner /></span>
      </div>
      <div className="flex h-2 items-center justify-center border-t border-[#222]"><Grip /></div>
    </section>
  );
}

function GradientPanel() {
  const label = 'w-[81px] pr-[5px] text-right text-[10px] leading-[19px] text-[#868686]';
  return (
    <section className="absolute top-[689px] right-[94px] flex w-[434px] flex-col rounded-t border border-[#222] bg-[#484848] text-[#bcbcbc]">
      <div className="flex h-[13px] items-center justify-end gap-[10px] rounded-t border-b border-[#222] bg-[#313131] pr-[5px]">
        <Collapse left />
        <button aria-label="Close panel"><svg width="6" height="5" viewBox="0 0 6 5" stroke="#ccc" strokeWidth="1.500"><path d="M0 0l6 5M6 0L0 5" /></svg></button>
      </div>
      <Tabs
        active="Gradient"
        tabs={[
          { name: 'Stroke', width: 'w-[47px]' },
          { name: 'Gradient', width: 'w-[60px]', sort: true },
          { name: 'Transparency', width: 'w-[76px]' },
        ]}
      />
      <div className="flex pt-[6px] pr-[6px] pl-[6px]">
        <div className="flex w-[38px] flex-col items-start">
          <button aria-label="Gradient presets" className="flex items-center gap-1 text-[#ddd]">
            <span className="size-[30px] border border-[#222] bg-linear-to-r from-white to-[#222]" />
            <Down className="h-[3px] w-[5px] shrink-0" />
          </button>
          <div className="mt-[6px]"><FillStroke /></div>
          <button aria-label="Reverse gradient" className="mt-2.5 ml-[7px] text-[#707070]">
            <svg width="16" height="14" viewBox="0 0 16 14" fill="none" stroke="currentColor"><path d="M1.500.500h8v5h-8zM6.500 7.500h8v6h-8z" /><path d="M11 2h5l-2.500 3zM0 11h4.500L2.500 8z" fill="currentColor" stroke="none" /></svg>
          </button>
        </div>
        <div className="flex min-w-0 flex-1 flex-col gap-[7px]">
          <div className="flex">
            <label htmlFor="gtype" className="w-[47px] pr-[5px] text-right text-[10px] leading-[19px] font-semibold text-[#dedede]">Type:</label>
            <div className="relative flex h-[19px] flex-1">
              <select id="gtype" className="flex-1 appearance-none border border-[#222] bg-linear-to-b from-[#606060] to-[#505050]"><option></option></select>
              <span className="pointer-events-none absolute inset-y-[3px] right-[5px] flex w-[15px] items-center justify-end border-l border-[#888] text-[#dcdcdc]"><Down /></span>
            </div>
          </div>
          <div className="flex">
            <span className="w-[47px] pr-[5px] text-right text-[10px] leading-[19px] text-[#868686]">Stroke:</span>
            <div className="flex h-5 w-[70px] divide-x divide-[#2a2a2a] border border-[#2a2a2a] text-[#747474]">
              {['Within', 'Along', 'Across'].map((mode, i) => (
                <button key={mode} aria-label={`${mode} stroke`} className="flex flex-1 items-center justify-center bg-[#505050]">
                  <svg width="15" height="15" viewBox="0 0 15 15" fill="none" stroke="currentColor">
                    <path d="M.5 15V.500H15M5.500 15V5.500H15" />
                    {i === 1 && <path d="M.5.500l5 5" />}
                    {i === 2 && <path d="M3 15V3h12" stroke="#333" strokeWidth="1.500" />}
                  </svg>
                </button>
              ))}
            </div>
          </div>
          <div className="flex items-center">
            <span className="flex w-[47px] justify-end pr-[7px] text-[#707070]"><svg width="12" height="10" viewBox="0 0 12 10" fill="none" stroke="currentColor"><path d="M12 9.500H1L9 1M7 3c2 2 3 4 2.500 6" /></svg></span>
            <Field label="Angle" className="w-[68px]" disabled />
          </div>
          <div className="flex items-center">
            <span className="flex w-[47px] justify-end pr-[6px] text-[#707070]"><svg width="15" height="14" viewBox="0 0 15 14" fill="none" stroke="currentColor"><ellipse cx="9.500" cy="6" rx="4.500" ry="4" /><path d="M2 1v11M0 3l2-2 2 2M0 10l2 2 2-2M5 12.500h9" /></svg></span>
            <Field label="Aspect ratio" className="w-[68px]" disabled />
          </div>
        </div>
      </div>
      <div className="mt-[14px] flex items-start gap-[11px] pl-[10px]">
        <div className="h-[234px] w-[387px] border border-[#222] bg-[linear-gradient(90deg,#fff_3%,#f2f4f3_8%,#dcdcdc_20%,#b5b7b6_40%,#9fa1a0_50%,#8b8c8b_60%,#686566_75%,#54534f_82%,#433f3c_88%,#222_93%,#000_99%)]" />
        <button aria-label="Delete stop" className="mt-1 text-[#707070]"><Trash /></button>
      </div>
      <div className="mt-[27px] flex flex-col gap-[7px] pb-[5px] pl-[10px]">
        <div className="flex"><span className={label}>Opacity:</span><Field label="Stop opacity" className="w-[68px]" disabled /></div>
        <div className="flex">
          <span className={label}>Location:</span><Field label="Stop location" className="w-[68px]" disabled />
          <span className="mt-auto mr-0.5 ml-auto"><ResizeCorner /></span>
        </div>
      </div>
      <div className="flex h-[9px] items-center justify-center border-t border-[#222]"><Grip /></div>
    </section>
  );
}

function App() {
  return (
    <div className="relative flex h-screen flex-col overflow-hidden border-b border-[#222] bg-[#484848] font-['Noto_Sans','Noto_Sans_CJK_KR',sans-serif]">
      <MenuBar />
      <ControlBar />
      <div className="flex min-h-0 flex-1">
        <ToolBox />
        <DocumentWindow />
        <IconDock />
        <CharacterPanel />
        <AppearancePanel />
      </div>
      <SwatchesPanel />
      <GradientPanel />
    </div>
  );
}

export default memo(App);
